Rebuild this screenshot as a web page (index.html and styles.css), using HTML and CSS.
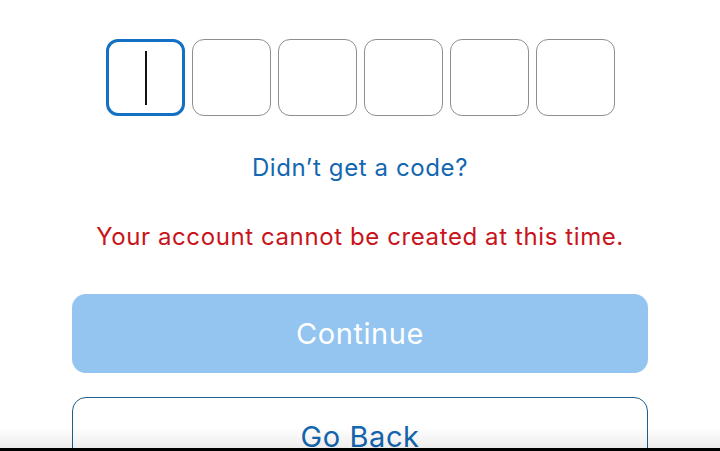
FILE: index.html
```html
<!DOCTYPE html>
<html lang="en">
<head>
<meta charset="utf-8">
<title>Verify code</title>
<link rel="stylesheet" href="styles.css">
</head>
<body>
<main class="page">
  <div class="code-row">
    <div class="code-box active"><span class="caret"></span></div>
    <div class="code-box"></div>
    <div class="code-box"></div>
    <div class="code-box"></div>
    <div class="code-box"></div>
    <div class="code-box"></div>
  </div>
  <a class="resend" href="#">Didn’t get a code?</a>
  <p class="error">Your account cannot be created at this time.</p>
  <button class="btn btn-primary" type="button">Continue</button>
  <button class="btn btn-secondary" type="button">Go Back</button>
</main>
<div class="bottom-shade"></div>
</body>
</html>
```
FILE: styles.css
```css
html, body {
  margin: 0;
  padding: 0;
  background: #ffffff;
  overflow: hidden;
  height: 100%;
}
body {
  font-family: Inter, "Noto Sans", "Liberation Sans", sans-serif;
}
.page {
  display: flex;
  flex-direction: column;
  align-items: center;
  padding: 39px 72px 0;
}
.code-row {
  display: flex;
  gap: 7px;
}
.code-box {
  box-sizing: border-box;
  width: 79px;
  height: 77px;
  border: 1px solid #8e8e8e;
  border-radius: 12px;
  display: flex;
  align-items: center;
  justify-content: center;
}
.code-box.active {
  border: 3px solid #1470c2;
}
.caret {
  width: 2px;
  height: 54px;
  background: #111;
  margin-left: 1px;
}
.resend {
  margin-top: 38px;
  font-size: 24px;
  letter-spacing: 0.6px;
  line-height: 28px;
  color: #1467b0;
  text-decoration: none;
}
.error {
  margin: 41px 0 0;
  font-size: 24px;
  letter-spacing: 0.6px;
  line-height: 28px;
  color: #c8141a;
}
.btn {
  box-sizing: border-box;
  width: 576px;
  height: 79px;
  border-radius: 14px;
  font-family: inherit;
  font-size: 29px;
  letter-spacing: 0.6px;
  padding: 0;
}
.btn-primary {
  margin-top: 43px;
  background: #93c5f0;
  border: none;
  color: #ffffff;
}
.btn-secondary {
  margin-top: 24px;
  background: #ffffff;
  border: 1px solid #1f5f8f;
  color: #1467b0;
}
.bottom-shade {
  position: fixed;
  left: 0;
  right: 0;
  bottom: 0;
  height: 24px;
  background: linear-gradient(to bottom, rgba(0,0,0,0) 0, rgba(0,0,0,0.07) 21px, #000 21px, #000 24px);
}
```
